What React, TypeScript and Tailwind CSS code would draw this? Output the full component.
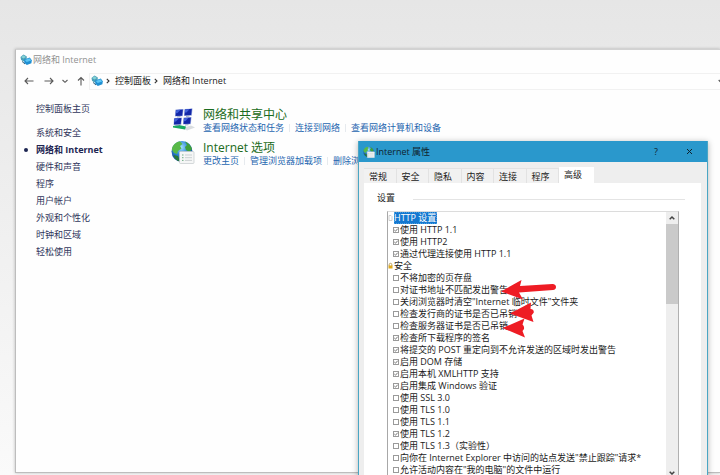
import React, { useId } from "react";

const categories = ["系统和安全", "网络和 Internet", "硬件和声音", "程序", "用户帐户", "外观和个性化", "时钟和区域", "轻松使用"];

const tabs = ["常规", "安全", "隐私", "内容", "连接", "程序", "高级"];

type Option = { text: string; on: boolean };

const httpOptions: Option[] = [
  { text: "使用 HTTP 1.1", on: true },
  { text: "使用 HTTP2", on: true },
  { text: "通过代理连接使用 HTTP 1.1", on: true },
];

const securityOptions: Option[] = [
  { text: "不将加密的页存盘", on: false },
  { text: "对证书地址不匹配发出警告", on: false },
  { text: '关闭浏览器时清空"Internet 临时文件"文件夹', on: false },
  { text: "检查发行商的证书是否已吊销", on: false },
  { text: "检查服务器证书是否已吊销", on: false },
  { text: "检查所下载程序的签名", on: true },
  { text: "将提交的 POST 重定向到不允许发送的区域时发出警告", on: true },
  { text: "启用 DOM 存储", on: true },
  { text: "启用本机 XMLHTTP 支持", on: true },
  { text: "启用集成 Windows 验证", on: true },
  { text: "使用 SSL 3.0", on: false },
  { text: "使用 TLS 1.0", on: false },
  { text: "使用 TLS 1.1", on: false },
  { text: "使用 TLS 1.2", on: true },
  { text: "使用 TLS 1.3（实验性）", on: false },
  { text: '向你在 Internet Explorer 中访问的站点发送"禁止跟踪"请求*', on: false },
  { text: '允许活动内容在"我的电脑"的文件中运行', on: false },
];

function NetworkIcon() {
  return (
    <svg className="size-3 shrink-0" viewBox="0 0 12 12" aria-hidden="true">
      <path d="M.5 3 3.500.5 6.800 2.600 6.500 6 3.400 7.600 1 5.800Z" fill="#4a9fb8" />
      <path d="M1.200 3.100 3.600 1.200 6 2.900 3.300 4.600Z" fill="#86d3d6" />
      <path d="M4.200 5.600 9.800 3.600 11.800 6.200 11.400 9.200 6.800 11 4.200 8.800Z" fill="#1f8fd2" />
      <path d="M4.900 5.900 9.500 4.300 11.200 6.400 6.700 8.100Z" fill="#5cc6f4" />
      <path d="M2 7.400 5 10" stroke="#35627e" strokeWidth="1" />
    </svg>
  );
}

function SharingIcon() {
  return (
    <svg className="h-6 w-6 shrink-0" viewBox="0 0 24 24" aria-hidden="true">
      <path d="M11 21 20 18.500 24 20.500 16 23.500Z" fill="#d9dde0" />
      <path d="M2 19 8 18 15 19.600 14 22.500 8 21.500 2 20.500Z" fill="#18a860" />
      {["translate(4 2)", "translate(13 1.400)", "translate(2.500 10.500)", "translate(12 10)"].map((t) => (
        <g key={t} transform={t}>
          <path d="M.5.600 8.600 0 7.800 7.300 0 7.600Z" fill="#a9b8e6" />
          <path d="M.9 1 7.900.400 7.200 6.700.5 7Z" fill="#1226a8" />
          <path d="M1 1.200 5.500.800 2.500 4 .8 4.200Z" fill="#4060d8" />
          <path d="M2 8 5.500 7.700" stroke="#7f8eb8" strokeWidth=".8" />
        </g>
      ))}
    </svg>
  );
}

function GlobeIcon({ className }: { className: string }) {
  const id = useId();
  return (
    <svg className={className} viewBox="0 0 24 24" aria-hidden="true">
      <defs>
        <radialGradient id={id} cx=".45" cy=".3" r=".7">
          <stop offset="0" stopColor="#a6e4ff" />
          <stop offset=".5" stopColor="#2f86d8" />
          <stop offset="1" stopColor="#0d3f8c" />
        </radialGradient>
      </defs>
      <circle cx="11" cy="11.500" r="10.500" fill={`url(#${id})`} />
      <path d="M9 1.300C4.500 2.200 1.500 5.500.8 9.500L3 13l3 1 1-3 3.500-2.500L9 6l2.500-2Z" fill="#58b947" />
      <path d="M14 1.600c3.500 1.400 6 4 7 7.500L18.500 12 15 10l-1-3 2-2Z" fill="#3fa03a" />
      <path d="M2.500 15 7 16l2 5.600C6 21 3.500 18.500 2.500 15Z" fill="#277b35" />
      <rect x="8.500" y="11.500" width="14.500" height="12" rx="1" fill="#f5f6f6" stroke="#c3c9cc" strokeWidth=".7" />
      <path d="M11 15h1.500M11 17.700h1.500M11 20.400h1.500" stroke="#6fae84" strokeWidth="1" />
      <path d="M14 15h7M14 17.700h7M14 20.400h7" stroke="#c6ccce" strokeWidth=".9" />
    </svg>
  );
}

function Chevron() {
  return (
    <svg className="size-2 shrink-0" viewBox="0 0 8 8" fill="none" stroke="#333" strokeWidth="1.100" aria-hidden="true">
      <path d="M2.800 1.800 5 4 2.800 6.200" />
    </svg>
  );
}

function NavButton({ label, path }: { label: string; path: string }) {
  return (
    <button type="button" aria-label={label} className="flex size-3 items-center justify-center">
      <svg className="size-3" viewBox="0 0 12 12" fill="none" stroke="#5a5a5a" strokeWidth="1.100">
        <path d={path} />
      </svg>
    </button>
  );
}

function TaskGroup({ icon, title, links }: { icon: React.ReactNode; title: string; links: string[] }) {
  return (
    <section className="flex h-[33px] gap-2">
      {icon}
      <div>
        <h2 className="text-[12px] leading-[15px] text-[#1a6b20]">
          <a href="#">{title}</a>
        </h2>
        <ul className="flex text-[9px] leading-3 whitespace-nowrap text-[#1f66b0]">
          {links.map((l, i) => (
            <li key={l} className="flex items-center">
              {i > 0 && <span className="mx-[5px] h-2 w-px bg-[#e6eaee]" />}
              <a href="#">{l}</a>
            </li>
          ))}
        </ul>
      </div>
    </section>
  );
}

function OptionRow({ option }: { option: Option }) {
  return (
    <li>
      <label className="flex h-3 items-center gap-px pl-[5px]">
        <span className="grid size-[6px] shrink-0">
          <input
            type="checkbox"
            defaultChecked={option.on}
            className="peer col-start-1 row-start-1 size-[6px] appearance-none border border-[#9a9a9a] bg-white"
          />
          <svg
            className="pointer-events-none col-start-1 row-start-1 hidden size-[6px] peer-checked:block"
            viewBox="0 0 6 6"
            fill="none"
            stroke="#555"
            strokeWidth=".8"
          >
            <path d="M1.300 3 2.500 4.200 4.700 1.700" />
          </svg>
        </span>
        <span>{option.text}</span>
      </label>
    </li>
  );
}

function PropertiesDialog() {
  return (
    <div
      role="dialog"
      aria-label="Internet 属性"
      className="absolute top-[141px] -bottom-10 left-[358px] flex w-[350px] flex-col border-x border-[#4aa6c4] bg-[#eeeeee] shadow-[0_1px_6px_rgba(0,0,0,0.3)]"
    >
      <header className="flex h-[21px] shrink-0 items-center gap-px bg-[#2a98cc] pr-3 pl-1 text-[#10222c]">
        <GlobeIcon className="size-3 shrink-0" />
        <h2 className="grow text-[9px]">Internet 属性</h2>
        <button type="button" aria-label="帮助" className="w-4 text-[9px]">?</button>
        <button type="button" aria-label="关闭" className="ml-[18px] flex size-3 items-center justify-center">
          <svg className="size-[7px]" viewBox="0 0 7 7" stroke="#10222c" strokeWidth="1">
            <path d="M1 1 6 6M6 1 1 6" />
          </svg>
        </button>
      </header>

      <div role="tablist" className="ml-[5px] flex h-[21px] w-[230px] shrink-0 items-end text-left text-[9px] text-[#222]">
        {tabs.map((t, i) => (
          <button
            key={t}
            type="button"
            role="tab"
            aria-selected={i === 6}
            className={
              i === 6
                ? "h-4 w-[35px] bg-white pb-px pl-[5px] text-left leading-[15px]"
                : "h-[15px] flex-1 border-t border-r border-[#e2e2e2] bg-[#f1f1f1] pl-[5px] text-left leading-[15px]"
            }
          >
            {t}
          </button>
        ))}
      </div>

      <div role="tabpanel" className="mr-[6px] ml-[5px] flex min-h-0 grow flex-col bg-white pr-[22px] pl-[23px]">
        <div className="flex h-7 shrink-0 items-center gap-[18px] text-[9px] text-[#222]">
          <h3 className="-ml-[10px] pt-[2px]">设置</h3>
          <span className="mt-1 -mr-[6px] h-px grow bg-[#e4e4e4]" />
        </div>
        <div className="flex min-h-0 grow border border-t-[#dcdcdc] border-r-[#b0b0b0] border-l-[#a8a8a8]">
          <ul className="min-w-0 grow overflow-hidden text-[9px] leading-3 whitespace-nowrap text-[#1a1a1a]">
            <li className="flex h-3 items-center gap-px">
              <svg className="h-2 w-[5px]" viewBox="0 0 5 8" fill="#fff" stroke="#c4c4c4" aria-hidden="true">
                <path d="M1 1.500h2l1 1v4H1Z" strokeWidth=".8" />
              </svg>
              <span className="bg-[#1478d0] pr-px text-white outline-1 -outline-offset-1 outline-dotted outline-[#4a9ee0]">HTTP 设置</span>
            </li>
            {httpOptions.map((o) => (
              <OptionRow key={o.text} option={o} />
            ))}
            <li className="flex h-3 items-center gap-px">
              <svg className="h-2 w-[5px]" viewBox="0 0 5 8" aria-hidden="true">
                <path d="M1.200 4V2.600a1.300 1.300 0 0 1 2.600 0V4" fill="none" stroke="#b08d3a" strokeWidth=".8" />
                <rect x=".500" y="3.500" width="4" height="3" fill="#e0a91c" />
              </svg>
              <span>安全</span>
            </li>
            {securityOptions.map((o) => (
              <OptionRow key={o.text} option={o} />
            ))}
          </ul>
          <div className="flex h-[269px] w-3 shrink-0 flex-col bg-[#eeeeee]">
            <button type="button" aria-label="向上滚动" className="flex h-3 w-full items-center justify-center">
              <svg className="size-[6px]" viewBox="0 0 6 6" fill="none" stroke="#444" strokeWidth="1.500">
                <path d="M.7 4.300 3 2 5.300 4.300" />
              </svg>
            </button>
            <div className="h-20 bg-[#cacaca]" />
            <button type="button" aria-label="向下滚动" className="mt-auto flex h-4 w-full items-center justify-center">
              <svg className="size-[6px]" viewBox="0 0 6 6" fill="none" stroke="#444" strokeWidth="1.500">
                <path d="M.7 1.700 3 4 5.300 1.700" />
              </svg>
            </button>
          </div>
        </div>
      </div>
    </div>
  );
}

function RedArrows() {
  return (
    <svg className="pointer-events-none absolute top-[275px] left-[495px] h-[70px] w-[70px]" viewBox="495 275 70 70" fill="#ee1c24" aria-hidden="true">
      <path d="M501 291.500 521.500 280 520 286 552.500 284Q556 284.300 556 287 556 289.500 553 290L519 292.500 523 299.500Z" />
      <path d="M510 313.500 531 302.500 530.500 309Q534 309 533.800 312.500L531.500 315.500 533.500 322Z" />
      <path d="M502.500 328 524.500 318.500 522.500 324.500Q524.500 326 524 329L522.500 331 525 337.500Z" />
    </svg>
  );
}

export default function App() {
  return (
    <div className="relative h-screen overflow-hidden bg-linear-to-b from-[#e6e6e6] to-[#fafafa] pt-[49px] pb-[2px] pl-[15px] font-['Open_Sans','Noto_Sans_CJK_SC',sans-serif]">
      <main className="flex h-full flex-col border-b border-l border-[#bdbdbd] border-t border-t-[#d2d2d2] bg-[#fefefe] shadow-[0_0_3px_rgba(0,0,0,0.25)]">
        <header className="flex h-[21px] items-center gap-px pb-[2px] pl-1 text-[9px] text-[#929292]">
          <NetworkIcon />
          <h1>网络和 Internet</h1>
        </header>

        <nav className="flex h-[20px] items-center pl-[7px]">
          <div className="flex items-center">
            <NavButton label="后退" path="M10.500 6H2M5 3 2 6 5 9" />
            <span className="w-2" />
            <NavButton label="前进" path="M1.500 6H10M7 3 10 6 7 9" />
            <span className="w-1" />
            <NavButton label="最近位置" path="M3.500 5 6 7.300 8.500 5" />
            <span className="w-1" />
            <NavButton label="向上" path="M6 10.500V2.500M3 5.500 6 2.500 9 5.500" />
          </div>
          <div className="ml-[2px] flex h-[17px] grow items-center justify-between overflow-hidden border-y border-l border-[#f1f1f1] text-[9px] text-[#222]">
            <ol className="flex items-center gap-[3px] pl-px">
              <li className="flex items-center gap-px"><NetworkIcon /><Chevron /></li>
              <li className="flex items-center gap-px"><a href="#">控制面板</a><Chevron /></li>
              <li><a href="#">网络和 Internet</a></li>
            </ol>
            <button type="button" aria-label="展开地址栏" className="-mr-1">
              <svg className="size-[6px]" viewBox="0 0 6 6" fill="none" stroke="#555" strokeWidth="1.200">
                <path d="M.7 2 3 4.300 5.300 2" />
              </svg>
            </button>
          </div>
        </nav>

        <div className="flex grow">
          <aside className="w-[155px] shrink-0 pt-[9px] pl-[8px] text-[9px] leading-[17px] text-[#30365c]">
            <a href="#" className="ml-3 block">控制面板主页</a>
            <ul className="mt-[7px]">
              {categories.map((c, i) => (
                <li key={c} className="flex items-center">
                  <span className={i === 1 ? "mr-2 size-1 rounded-full bg-[#1d2552]" : "mr-2 size-1"} />
                  <a href="#" className={i === 1 ? "font-bold text-[#1d2552]" : ""}>{c}</a>
                </li>
              ))}
            </ul>
          </aside>
          <div className="pt-4">
            <TaskGroup icon={<SharingIcon />} title="网络和共享中心" links={["查看网络状态和任务", "连接到网络", "查看网络计算机和设备"]} />
            <TaskGroup icon={<GlobeIcon className="h-6 w-6 shrink-0" />} title="Internet 选项" links={["更改主页", "管理浏览器加载项", "删除浏览的历史记录和 Cookie"]} />
          </div>
        </div>
      </main>

      <PropertiesDialog />
      <RedArrows />
    </div>
  );
}
